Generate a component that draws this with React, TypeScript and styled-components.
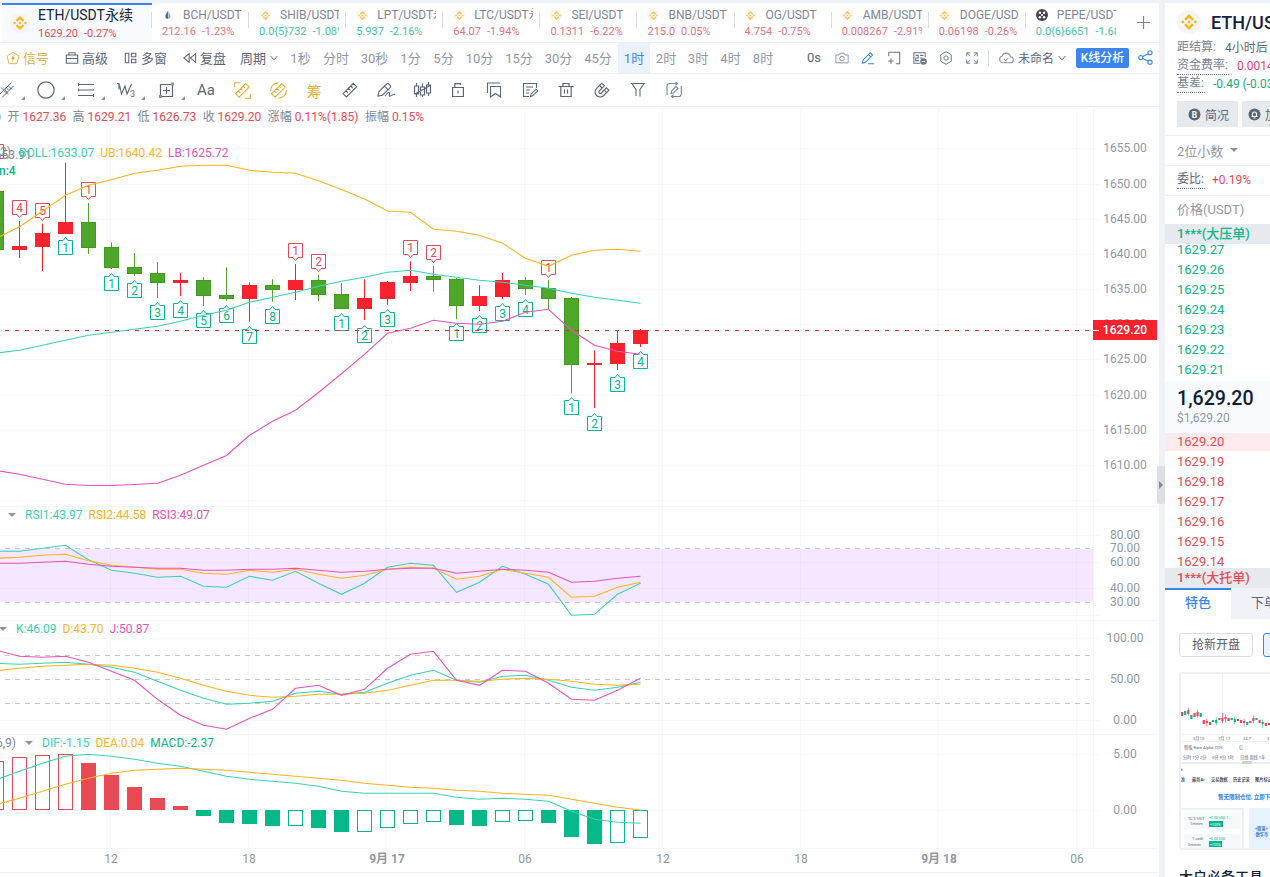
import React from "react";
import styled, { createGlobalStyle } from "styled-components";

const Global = createGlobalStyle`
  * { box-sizing: border-box; }
  body { margin: 0; overflow: hidden; background: #f1f2f7; }
  body, svg text { font-family: Roboto, "Noto Sans CJK SC", sans-serif; }
`;

const TEAL = "#38d3b4";
const AMBER = "#ffb31a";
const PINK = "#ea51bb";
const UP = "#e84a55";
const DOWN = "#05b889";
const MUTED = "#8f98a6";
const SLATE = "#5b6779";
const GOLD = "#dcae35";
const BLUE = "#3c85ee";

/* ---------- layout ---------- */
const Page = styled.div`
  width: 1270px; height: 877px; overflow: hidden; display: flex; gap: 6px; padding-top: 3px;
  background: #f1f2f7;
`;
const Main = styled.main`
  width: 1159px; flex: none; background: #fff; position: relative; display: flex; flex-direction: column;
`;
const TabBar = styled.div`
  height: 40px; flex: none; display: flex; padding-left: 2px; border-bottom: 1px solid #eef0f3; position: relative;
`;
const ActiveTab = styled.div`
  width: 150px; flex: none; border-top: 2px solid ${BLUE}; background: #f8fafd; display: flex; padding-left: 8px; gap: 8px;
`;
const ActiveName = styled.div`font-size: 14px; line-height: 16px; color: #14233c; margin-top: 2px; white-space: nowrap;`;
const ActiveQuote = styled.div`font-size: 11px; line-height: 14px; color: ${UP}; display: flex; gap: 6px; margin-top: 4px;`;
const CoinRound = styled.div<{ $size: number; $top?: number }>`
  width: ${(p) => p.$size}px; height: ${(p) => p.$size}px; margin-top: ${(p) => p.$top || 0}px; border-radius: 50%;
  background: #f5f5f5; display: flex; align-items: center; justify-content: center; flex: none;
`;
const PairTab = styled.div`
  width: 97.1px; flex: none; padding: 4px 0 0 10px; position: relative; opacity: .78;
  &::before { content: ""; position: absolute; left: -1px; top: 9px; width: 1px; height: 16px; background: #d0d4da; }
`;
const PairHead = styled.div`width: 80px; height: 16px; display: flex; align-items: center;`;
const PairIcon = styled.div`width: 12px; height: 12px; flex: none; margin-right: 9px; display: flex; align-items: center; justify-content: center;`;
const PairName = styled.div`font-size: 12px; line-height: 16px; color: #59657a; overflow: hidden; white-space: nowrap; width: 59px;`;
const PairQuote = styled.div<{ $up?: boolean }>`
  width: 80px; overflow: hidden; white-space: nowrap; font-size: 11px; line-height: 16px; display: flex; gap: 6px; margin-top: 1px;
  color: ${(p) => (p.$up ? DOWN : UP)};
`;
const AddTab = styled.div`position: absolute; left: 1137px; top: 13px; display: flex;`;

const ToolRow = styled.div`
  height: 31px; flex: none; display: flex; align-items: center; border-bottom: 1px solid #eef0f3; font-size: 13px;
  color: ${SLATE}; white-space: nowrap; padding-bottom: 1px;
`;
const Tool = styled.div<{ $w: number; $c?: string; $fs?: number }>`
  width: ${(p) => p.$w}px; flex: none; display: flex; align-items: center; gap: 3px; color: ${(p) => p.$c || SLATE};
  font-size: ${(p) => p.$fs || 13}px;
`;
const Period = styled.div<{ $on?: boolean; $w: number }>`
  width: ${(p) => p.$w}px; height: 30px; flex: none; display: flex; align-items: center; justify-content: center; 
  background: ${(p) => (p.$on ? "#eaf3fd" : "transparent")}; color: ${(p) => (p.$on ? BLUE : MUTED)};
`;
const Divider = styled.div`width: 1px; height: 16px; background: #d8dbe1; margin-right: 9px;`;
const AnalyseButton = styled.div`
  width: 53px; height: 20px; background: ${BLUE}; border-radius: 2px; color: #fff; font-size: 12px; line-height: 20px;
  font-weight: 500; text-align: center; margin-right: 9px; flex: none;
`;
const DrawRow = styled.div`height: 33px; flex: none; display: flex; align-items: center; border-bottom: 1px solid #eef0f3;`;
const DrawTool = styled.div<{ $w: number; $c?: string; $edge?: boolean }>`
  width: ${(p) => p.$w}px; height: 32px; flex: none; display: flex; align-items: center; position: relative;
  justify-content: ${(p) => (p.$edge ? "flex-start" : "center")};
  color: ${(p) => p.$c || SLATE}; font-size: 15px;
`;
const Corner = styled.i`
  position: absolute; right: 1px; bottom: 6px; border: 2.5px solid #8b94a2; border-top-color: transparent; border-left-color: transparent;
`;

const ChartArea = styled.div`position: relative; flex: 1; overflow: hidden;`;
const Legend = styled.div<{ $x: number; $y: number; $gap?: number }>`
  position: absolute; left: ${(p) => p.$x}px; top: ${(p) => p.$y}px; display: flex; gap: ${(p) => p.$gap || 6}px; font-size: 12px; line-height: 14px;
  white-space: nowrap; color: #7d8795;
`;
const Value = styled.span<{ $c: string; $b?: boolean }>`color: ${(p) => p.$c}; font-weight: ${(p) => (p.$b ? 500 : 400)};`;
const Caret = styled.i<{ $l?: number; $m?: number }>`
  width: 0; height: 0; border: 4px solid transparent; border-top-color: #8b94a2; border-bottom: 0; align-self: center;
  margin-left: ${(p) => p.$l || 0}px; margin-right: ${(p) => p.$m || 0}px;
`;
const Handle = styled.div`
  position: absolute; right: -6px; top: 463px; width: 8px; height: 38px; background: #dce0e5; border-radius: 2px; z-index: 2;
  display: flex; align-items: center; padding-left: 2px;
  i { border: 4px solid transparent; border-left-color: #838d9b; border-right: 0; }
`;

/* ---------- side panel ---------- */
const Side = styled.aside`
  width: 240px; flex: none; background: #fff; display: flex; flex-direction: column;
  > * { flex: none; }
`;
const SideTitle = styled.div`
  display: flex; align-items: center; gap: 10px; padding: 7px 0 0 12px; font-size: 18px; font-weight: 500; color: #14233c; height: 31px;
`;
const Facts = styled.div`padding: 5px 0 0 12px; height: 63px;`;
const Fact = styled.div`height: 18px; display: flex; align-items: center; gap: 8px; font-size: 12px; line-height: 17px; white-space: nowrap;`;
const Label = styled.span<{ $dot?: boolean; $dark?: boolean }>`
  color: ${(p) => (p.$dark ? SLATE : "#78828f")}; line-height: 17px; padding-right: 1px;
  border-bottom: ${(p) => (p.$dot ? "1px dotted #6f7989" : "1px solid transparent")};
`;
const Chips = styled.div`display: flex; gap: 4px; padding: 4px 0 8px 12px; height: 39px; border-bottom: 1px solid #eef0f3;`;
const Chip = styled.div`
  width: 61px; height: 26px; background: #e7eaed; font-size: 12px; color: ${SLATE}; display: flex; align-items: center; gap: 4px;
  padding-left: 11px; white-space: nowrap; flex: none; overflow: hidden;
  &:nth-child(2) { padding-left: 6px; }
`;
const Strip = styled.div<{ $last?: boolean; $h: number; $fs?: number }>`
  height: ${(p) => p.$h}px; padding-left: 12px; display: flex; align-items: center; gap: 7px; color: ${MUTED}; white-space: nowrap;
  border-bottom: ${(p) => (p.$last ? 0 : 1)}px solid #eef0f3; font-size: ${(p) => p.$fs || 13}px;
  padding-bottom: ${(p) => (p.$last ? 3 : 1)}px;
`;
const Wall = styled.div<{ $c: string }>`
  height: 20px; padding-left: 12px; background: #e6e9ed; color: ${(p) => p.$c}; font-size: 13px; line-height: 19px; font-weight: 500;
`;
const Book = styled.div<{ $side: "ask" | "bid" }>`
  height: ${(p) => (p.$side === "ask" ? 137 : 136)}px; overflow: hidden;
  display: flex; flex-direction: column; justify-content: ${(p) => (p.$side === "ask" ? "flex-end" : "flex-start")};
  padding-bottom: ${(p) => (p.$side === "ask" ? 1 : 0)}px;
`;
const Level = styled.div<{ $c: string; $hot?: boolean }>`
  height: 18px; margin: 1px 0; padding-left: 12px; font-size: 13px; line-height: 18px; flex: none; color: ${(p) => p.$c};
  background: ${(p) => (p.$hot ? "#fceaec" : "transparent")};
`;
const Last = styled.div`height: 51px; background: #f8fafd; padding: 6px 0 0 12px;`;
const LastPrice = styled.div`font-size: 19.6px; line-height: 23px; font-weight: 500; color: #101f38;`;
const LastUsd = styled.div`font-size: 12px; line-height: 16px; color: ${MUTED};`;
const SideTabs = styled.div`display: flex; height: 31px; font-size: 13px;`;
const SideTab = styled.div<{ $on?: boolean }>`
  width: 66px; text-align: center; flex: none; font-weight: ${(p) => (p.$on ? 500 : 400)};
  color: ${(p) => (p.$on ? BLUE : SLATE)}; background: ${(p) => (p.$on ? "#fff" : "#f1f2f7")};
  border-top: ${(p) => (p.$on ? 2 : 0)}px solid ${BLUE}; line-height: ${(p) => (p.$on ? 26 : 29)}px;
`;
const Pills = styled.div`display: flex; gap: 10px; padding: 14px 0 0 14px;`;
const Pill = styled.div<{ $on?: boolean }>`
  width: 74px; height: 24px; border: 1px solid ${(p) => (p.$on ? BLUE : "#dadde3")}; border-radius: 3px; text-align: center; flex: none;
  background: ${(p) => (p.$on ? "#eaf3fd" : "#fff")}; font-size: 12px; line-height: 23px; color: #4f5b6c;
`;
const Thumb = styled.div`
  margin: 15px 0 0 14px; width: 200px; height: 178px; border: 2px solid #eff0f5; border-radius: 3px; overflow: hidden;
`;
const SideHeading = styled.div`margin: 17px 0 0 14px; font-size: 14px; line-height: 20px; font-weight: 500; color: #14233c; white-space: nowrap;`;

/* ---------- icons ---------- */
const Svg: React.FC<{ w?: number; h?: number; vb?: string; sw?: number; c?: string; children: React.ReactNode }> = ({
  w = 16, h = 16, vb = "0 0 16 16", sw = 1, c = "currentColor", children,
}) => (
  <svg width={w} height={h} viewBox={vb} fill="none" stroke={c} strokeWidth={sw} display="block">
    {children}
  </svg>
);
const Bnb = ({ s }: { s: number }) => (
  <svg width={s} height={s} viewBox="0 0 16 16" fill="#fbb41d">
    <path d="M8 0l4.9 4.9-1.8 1.8L8 3.6 4.9 6.7 3.1 4.9zM1.8 6.2L3.6 8 1.8 9.8 0 8zM14.2 6.2L16 8l-1.8 1.8L12.4 8zM8 6.2L9.8 8 8 9.8 6.2 8zM4.9 9.3L8 12.4l3.1-3.1 1.8 1.8L8 16l-4.9-4.9z" />
  </svg>
);
const Flame = () => (
  <svg width="10" height="10" viewBox="0 0 10 10"><path d="M5 1C4 3 1.8 5 2.5 7.4 3 9 6 9 5 8z" fill="#2c3950" /><path d="M5.6 1c.3 2 2.4 4 1.6 6.6C6.7 9 5 9 5 8.4z" fill="#5ba7e8" /></svg>
);
const Okx = () => (
  <svg width="12" height="12" viewBox="0 0 12 12"><circle cx="6" cy="6" r="6" fill="#16101d" />
    <g fill="#fff"><circle cx="6" cy="6" r="1.1" /><circle cx="3.9" cy="3.7" r="1.2" /><circle cx="8.1" cy="3.7" r="1.2" /><circle cx="3.9" cy="8.3" r="1.2" /><circle cx="8.1" cy="8.3" r="1.2" /></g></svg>
);
const Chevron = () => <Svg w={10} h={10} vb="0 0 10 10"><path d="M1.5 3L5 6.8 8.5 3" /></Svg>;
const ChipB = () => (
  <svg width="13" height="13" viewBox="0 0 13 13"><circle cx="6.5" cy="6.5" r="6" fill="#5b6779" />
    <text x="6.5" y="9.6" fontSize="8.5" fontWeight="700" fill="#fff" textAnchor="middle">B</text></svg>
);
const ChipBell = () => (
  <svg width="13" height="13" viewBox="0 0 13 13"><circle cx="6.5" cy="6.5" r="6" fill="#5b6779" />
    <path d="M3.5 8.5h6M4.5 8V6a2 2 0 014 0v2M5.5 10h2" stroke="#fff" fill="none" strokeWidth="1.1" /></svg>
);

const RulerShape = () => <path d="M1 11.6L11.3 1.3l3.4 3.4L4.4 15zM4 8.800l2 2M6.400 6.400l2 2M8.800 4l2 2" />;
const GoldRuler = () => <path d="M1.500 11L11 1.500l3.300 3.300-9.500 9.500zM4.200 8.300l1.700 1.700M6.400 6.100l1.700 1.700M8.600 3.900l1.700 1.700" />;
const drawIcons: { w: number; el: React.ReactNode }[] = [
  { w: 26, el: <Svg w={15} vb="1 0 15 16"><path d="M0 13L12.500 .5M3 15.500L14.500 4" /><path d="M2 5.500l4 4M5.500 9l3.500 3.500M6.500 5l3 3M9.500 4l3.500 3.500M5 6.500l4 5" strokeWidth=".9" /></Svg> },
  { w: 40, el: <Svg w={18} h={18} vb="0 0 18 18"><circle cx="9" cy="9" r="8.2" strokeWidth="1.2" /></Svg> },
  { w: 40, el: <Svg w={18} h={14} vb="0 0 18 14" sw={1.1}><path d="M1 1.500h16M1 7h16M1 12.500h16M1.500 0v3M16.500 11v3M1.500 5.500v3" /></Svg> },
  { w: 40, el: <Svg w={20} h={16} vb="0 0 20 16" sw={1.1}><path d="M1 1.5h2v6M3.5 2.5L5.5 12 9 4l2 8 4.5-10" /><text x="14" y="14.5" fontSize="9" fill="currentColor" stroke="none">3</text></Svg> },
  { w: 40, el: <Svg w={17} h={16} vb="0 0 17 16"><path d="M2.5 2.5h12v12h-12zM8.5 5v7M5 8.5h7" strokeWidth="1.2" /><path d="M1 13h3v3H1zM13 .5h3v3h-3z" fill="#8b94a2" stroke="none" /></Svg> },
];
const drawIcons2: { c?: string; el: React.ReactNode }[] = [
  { el: <span>Aa</span> },
  { c: GOLD, el: <Svg w={17} h={17}><GoldRuler /><path d="M.7 5V.7H6M10.500 15.300h4.800V11" /></Svg> },
  { c: GOLD, el: <Svg w={17} h={17}><GoldRuler /><path d="M.8 8.500A7 7 0 018 .8M15.300 7.500a7 7 0 01-7.500 7.700" /></Svg> },
  { c: GOLD, el: <span>筹</span> },
  { el: <Svg sw={1.1}><RulerShape /></Svg> },
  { el: <Svg w={19} h={16} vb="0 0 19 16" sw={1.1}><path d="M1 14l.8-4.200L9.500 2a1.600 1.600 0 012.300 0l1.400 1.400a1.600 1.600 0 010 2.300L5.500 13.200zM7.500 4.200l3.600 3.600M8 14.300c2-3.500 4-4.500 4.500-3.200s-1 3.200.5 3 2-2 5-1.600" /></Svg> },
  { el: <Svg w={19} h={16} vb="0 0 19 16" sw={1.2}><path d="M1.500 4h4v8h-4zM7.500 5h4v8h-4zM13.500 3h4v8h-4zM3.500 1v3M3.500 12v3M9.500 1.500V5M9.500 13v2M15.500 0v3M15.500 11v3M2 12L17 3.500" /></Svg> },
  { el: <Svg sw={1.2}><path d="M2.600 5.500h10.800v9H2.600zM4.800 5.500V1.600h5.400V3M8 8.500v3" /></Svg> },
  { el: <Svg sw={1.1}><path d="M1.500 11V1H14M4.500 4.500h10V15l-5-3.500-5 3.500z" /></Svg> },
  { el: <Svg sw={1.1}><path d="M14.500 6V1.500h-13v13H7M4 5h7M4 8h4M4 11h3M8.500 14.500l.6-2.300 5-5 1.600 1.600-5 5z" /></Svg> },
  { el: <Svg sw={1.2}><path d="M.5 4.500h15M2.800 4.500v10h10.400v-10M5 4.500v-3h6v3M6.500 7.500v4M9.500 7.500v4" /></Svg> },
  { el: <Svg sw={1.1}><path d="M7.800 1.200L2.600 6.400a5 5 0 007.100 7.100l5.200-5.200-2.500-2.500-5.200 5.200a1.300 1.300 0 01-2-2l5.200-5.200zM5.500 3.500L8 6M10.100 8.100l2.500 2.500" /></Svg> },
  { el: <Svg sw={1.1}><path d="M.8 1.500h14.400M1.800 1.500L6 7.500V14M14.200 1.500L10 7.500v7" /></Svg> },
  { el: <Svg sw={1.1} c="#7a8594"><path d="M1 13V4a2.500 2.500 0 012.500-2.500H11M9.500 0l2 1.500-2 1.800M15.300 4v8a2.500 2.500 0 01-2.500 2.500H6M7.500 16l-2-1.500 2-1.800M5 11.500l.5-2.500L10 4.500l2 2L7.400 11z" /></Svg> },
];

/* ---------- data ---------- */
const pairs: [string, string, string, boolean, React.ReactNode?][] = [
  ["BCH/USDT永续", "212.16", "-1.23%", false, <Flame key="f" />],
  ["SHIB/USDT永续", "0.0{5}732", "-1.08%", true],
  ["LPT/USDT永续", "5.937", "-2.16%", true],
  ["LTC/USDT永续", "64.07", "-1.94%", false],
  ["SEI/USDT", "0.1311", "-6.22%", false],
  ["BNB/USDT", "215.0", "0.05%", false],
  ["OG/USDT", "4.754", "-0.75%", false],
  ["AMB/USDT永续", "0.008267", "-2.91%", false],
  ["DOGE/USDT", "0.06198", "-0.26%", false],
  ["PEPE/USDT永续", "0.0{6}6651", "-1.68%", true, <Okx key="o" />],
];
const periods: [string, number][] = [
  ["1秒", 33], ["分时", 38], ["30秒", 39], ["1分", 33], ["5分", 33], ["10分", 39], ["15分", 40], ["30分", 39], ["45分", 40],
  ["1时", 32], ["2时", 32], ["3时", 32], ["4时", 33], ["8时", 32],
];

/* candle: [high, low, bodyTop, bodyBottom, rising] in chart pixels, one per hour */
const candles: [number, number, number, number, 0 | 1][] = [
  [191, 250, 191, 250, 0], [221, 258, 246, 250, 1], [223.7, 271, 233, 247, 1], [162.7, 234, 222, 234, 1], [203, 254, 222, 248, 0],
  [242.3, 269, 247, 268, 0], [253, 275.7, 267, 274, 0], [262, 298, 273, 283, 0], [272.7, 296, 280, 283, 1], [277, 306, 280, 296, 0],
  [267.3, 300.7, 295, 299, 0], [282.3, 321.7, 285, 299, 1], [279.3, 301.7, 285, 290, 0], [264, 300, 280, 290, 1], [275, 301, 280, 295, 0],
  [283, 309, 294, 309, 0], [279.3, 320, 298, 309, 1], [281, 305, 282, 299, 1], [261.3, 291, 276, 283, 1], [266, 291.7, 276, 280, 0],
  [278, 319.3, 279, 306, 0], [285.3, 311, 296, 306, 1], [273, 298.7, 280, 297, 1], [277, 295, 280, 289, 0], [280, 309, 288, 299, 0],
  [297, 393.3, 298, 365, 0], [350.3, 408, 363, 365, 1], [331, 370, 343, 364, 1], [329, 347, 330, 344, 1],
];
const topTags: [number, string, number][] = [
  [-1, "3", 144], [0, "4", 200], [1, "5", 203], [3, "1", 182], [12, "1", 243], [13, "2", 254], [17, "1", 240], [18, "2", 245], [23, "1", 260],
];
const lowTags: [number, string, number][] = [
  [2, "1", 240], [4, "1", 276], [5, "2", 283], [6, "3", 305], [7, "4", 303], [8, "5", 313], [9, "6", 308], [10, "7", 329], [11, "8", 309],
  [14, "1", 316], [15, "2", 328], [16, "3", 312], [19, "1", 326], [20, "2", 318], [21, "3", 306], [22, "4", 302], [24, "1", 400],
  [25, "2", 416], [26, "3", 377], [27, "4", 354],
];
const upper = [238, 226.7, 211.3, 195.3, 185.3, 179.7, 173.3, 170.3, 166.3, 165.3, 165.3, 170.3, 172.3, 173.3, 180.7, 189.5, 199, 211, 212.3, 229.3, 231.3, 235.3, 243.3, 258.3, 266.3, 255.3, 250.3, 249.3, 251.3];
const middle = [353, 350.3, 345.3, 340.3, 335.3, 332.3, 329.3, 326.3, 321.3, 315.3, 310.3, 302.3, 297.3, 292.3, 286.3, 281.3, 277.3, 272.3, 270.3, 274.3, 277.3, 280.3, 282.3, 285.3, 288.3, 293.3, 297.3, 300.3, 303.3];
const lower = [470.5, 474.3, 479.3, 484.3, 485.5, 485.5, 484.5, 483.3, 475.3, 465.3, 455.5, 435.3, 421.3, 410.3, 392.5, 373.7, 354.3, 333.3, 328.3, 320.3, 323.3, 324.3, 321.3, 312.3, 309.3, 330.3, 345.3, 351.3, 354.3];
/* oscillator values are thirds of a pixel below the pane origin */
const rsi1 = [154, 154, 145, 136, 179, 211, 220, 232, 229, 259, 262, 229, 241, 214, 250, 283, 250, 202, 190, 196, 277, 247, 199, 223, 253, 346, 343, 283, 250];
const rsi2 = [175, 172, 166, 163, 182, 196, 202, 208, 208, 220, 223, 211, 217, 208, 223, 235, 226, 208, 202, 205, 238, 229, 208, 220, 232, 292, 289, 262, 247];
const rsi3 = [190, 190, 187, 184, 193, 199, 202, 205, 205, 211, 211, 208, 208, 205, 211, 217, 214, 208, 205, 205, 220, 214, 208, 211, 217, 247, 244, 235, 229];
const kLine = [490, 493, 490, 487, 493, 502, 517, 544, 571, 595, 613, 610, 604, 580, 574, 583, 577, 550, 526, 511, 541, 547, 529, 526, 541, 562, 571, 562, 547];
const dLine = [512, 505, 499, 496, 493, 496, 505, 517, 535, 556, 574, 586, 592, 589, 583, 583, 580, 571, 556, 541, 541, 544, 538, 535, 538, 544, 553, 556, 553];
const jLine = [451, 469, 472, 469, 487, 514, 541, 598, 646, 676, 688, 655, 628, 565, 556, 586, 568, 505, 463, 454, 541, 556, 511, 514, 550, 598, 601, 571, 535];
const dif = [149, 124, 100, 79, 73, 79, 88, 100, 109, 124, 139, 148, 154, 160, 169, 184, 190, 190, 190, 190, 202, 208, 205, 208, 214, 244, 268, 277, 280];
const dea = [223, 205, 184, 163, 145, 130, 121, 118, 115, 118, 121, 127, 133, 139, 145, 151, 160, 166, 172, 175, 181, 184, 190, 193, 196, 208, 220, 232, 240];
const bars: [number, 0 | 1][] = [
  [93, 0], [81, 0], [75, 0], [72, 0], [99, 1], [135, 1], [171, 1], [204, 1], [228, 1], [258, 1], [279, 1], [282, 1], [288, 1], [288, 0], [294, 1],
  [306, 1], [306, 0], [294, 0], [282, 0], [276, 0], [285, 1], [288, 1], [276, 0], [273, 0], [279, 1], [321, 1], [342, 1], [339, 0], [324, 0],
];

const TOP = 107;
const cx = (i: number) => 19.5 + 23 * i;
const poly = (vals: number[], base = 0, k = 1) => vals.map((v, n) => `${cx(n - 1)},${(base + v * k).toFixed(1)}`).join(" ");
const Line = ({ v, base, k, c }: { v: number[]; base?: number; k?: number; c: string }) => (
  <polyline points={poly(v, base, k)} stroke={c} fill="none" strokeWidth="1.1" />
);
const priceTicks: [string, number][] = [
  ["1655.00", 148.5], ["1650.00", 184.5], ["1645.00", 219.5], ["1640.00", 254.5], ["1635.00", 289.5], ["1630.00", 324.5],
  ["1625.00", 359.5], ["1620.00", 395.5], ["1615.00", 430.5], ["1610.00", 465.5],
];
const otherTicks: [string, number][] = [
  ["80.00", 535.5], ["70.00", 548.5], ["60.00", 562.5], ["40.00", 588.5], ["30.00", 602.5], ["100.00", 638.5], ["50.00", 679.5],
  ["0.00", 720.5], ["5.00", 754.5], ["0.00", 810.5],
];
const hours: [string, number][] = [["12", 111], ["18", 249], ["9月 17", 387], ["06", 525], ["12", 663], ["18", 801], ["9月 18", 939], ["06", 1077]];

const Chart = () => (
  <svg width="1159" height="770" viewBox={`0 ${TOP} 1159 770`} display="block">
    <rect x="0" y="549" width="1093" height="53" fill="#f5e7ff" />
    <g stroke="#8a90b0" strokeOpacity=".055" shapeRendering="crispEdges">
      {[110.5, 248.5, 386.5, 524.5, 662.5, 800.5, 938.5, 1076.5].map((x) => <line key={x} x1={x} x2={x} y1={TOP} y2="848" />)}
      {[148.5, 184.5, 219.5, 254.5, 289.5, 324.5, 359.5, 395.5, 430.5, 465.5, 500.5, 535.5, 562.5, 588.5, 615.5, 638.5, 720.5, 754.5, 810.5].map((y) => (
        <line key={y} x1="0" x2="1099" y1={y} y2={y} />
      ))}
    </g>
    <g stroke="#f5f6f8" shapeRendering="crispEdges">
      {[506.5, 620.5, 734.5, 848.5].map((y) => <line key={y} x1="0" x2="1157" y1={y} y2={y} />)}
      <line x1="1093.5" x2="1093.5" y1={TOP} y2="848" />
      <line x1="0" x2="1159" y1="872.5" y2="872.5" stroke="#eef0f3" />
    </g>
    <g stroke="#c8c8c8" strokeDasharray="5 5" strokeDashoffset="5" shapeRendering="crispEdges">
      {[548.5, 602.5, 655.5, 679.5, 703.5].map((y) => <line key={y} x1="0" x2="1093" y1={y} y2={y} />)}
    </g>
    {candles.map(([h, l, a, b, up], n) => {
      const c = up ? "#f6222d" : "#4ea72a";
      const x = cx(n - 1);
      return (
        <g key={n} fill={c}>
          <rect x={x - 0.5} y={h} width="1" height={l - h} />
          <rect x={x - 7} y={a + 0.5} width="14" height={b - a - 1} stroke={up ? c : "#429a1e"} />
        </g>
      );
    })}
    {topTags.map(([i, t, y]) => (
      <g key={i}>
        <path d={`M${cx(i) - 7} ${y + 0.5}h14v14h-4.5l-2.5 3-2.5-3h-4.5z`} stroke={UP} fill="none" />
        <text x={cx(i)} y={y + 12} textAnchor="middle" fontSize="12" fill={UP}>{t}</text>
      </g>
    ))}
    {lowTags.map(([i, t, y]) => (
      <g key={i}>
        <path d={`M${cx(i) - 7} ${y + 14.5}h14v-14h-4.5l-2.5-3-2.5 3h-4.5z`} stroke={DOWN} fill="none" />
        <text x={cx(i)} y={y + 12} textAnchor="middle" fontSize="12" fill={DOWN}>{t}</text>
      </g>
    ))}
    <line x1="5" x2="1093" y1="330.5" y2="330.5" stroke="#f6222d" strokeDasharray="4 6" shapeRendering="crispEdges" />
    <Line v={upper} c={AMBER} /><Line v={middle} c={TEAL} /><Line v={lower} c={PINK} />
    <Line v={rsi1} base={500} k={1 / 3} c={TEAL} /><Line v={rsi2} base={500} k={1 / 3} c={AMBER} /><Line v={rsi3} base={500} k={1 / 3} c={PINK} />
    <Line v={kLine} base={500} k={1 / 3} c={TEAL} /><Line v={dLine} base={500} k={1 / 3} c={AMBER} /><Line v={jLine} base={500} k={1 / 3} c={PINK} />
    {bars.map(([v, solid], n) => {
      const y = 730 + v / 3;
      const c = v < 240 ? UP : DOWN;
      return (
        <rect key={n} x={cx(n - 1) - 7} y={Math.min(y, 810) + 0.5} width="14" height={Math.abs(810 - y) - 1} stroke={c} fill={solid ? c : "none"} />
      );
    })}
    <Line v={dif} base={730} k={1 / 3} c={TEAL} /><Line v={dea} base={730} k={1 / 3} c={AMBER} />
    <g fontSize="12" fill={MUTED} textAnchor="middle">
      {[...priceTicks, ...otherTicks].map(([t, y]) => <text key={t + y} x="1125" y={y + 3.5}>{t}</text>)}
      {hours.map(([t, x]) => <text key={x} x={x} y="863" fontWeight={t.length > 2 ? 700 : 400}>{t}</text>)}
    </g>
    <rect x="1093" y="320" width="64" height="20" fill="#f6222d" />
    <line x1="1093" x2="1099" y1="330.5" y2="330.5" stroke="#fff" />
    <text x="1125" y="334" fontSize="12" fontWeight="500" fill="#fff" textAnchor="middle">1629.20</text>
  </svg>
);

const ThumbArt = () => {
  const ys = [38, 37, 36, 41, 39, 38, 39, 46, 47, 48, 46, 46, 44, 44, 43, 44, 44, 45, 45, 46, 47, 48, 47, 44, 44, 46, 48, 49, 49];
  return (
    <svg width="196" height="174" viewBox="0 0 196 174" display="block">
      <g stroke="#f1f2f4"><path d="M41.5 0v60M0 60.5h196M0 67.5h196M0 108.5h196" /></g>
      {ys.map((y, i) => (
        <g key={i} fill={i % 5 === 1 || i % 7 === 3 ? "#05b889" : "#e84a55"}>
          <rect x={i * 3.1} y={y} width="2.2" height={i < 8 ? 4 : 2 + (i % 2)} />
          {i % 3 === 2 && <rect x={i * 3.1 + 0.8} y={y - 2.5} width=".6" height="8" />}
        </g>
      ))}
      <rect x="41" y="39" width=".7" height="10" fill="#e84a55" />
      <g fontSize="4.2" fill="#606a78">
        <text x="12" y="66">5月10</text><text x="37" y="66">7月 17</text><text x="62" y="66">24 7</text><text x="86" y="66">31</text>
        <text x="3" y="75">智能 Rate Alpha COIL</text><text x="58" y="75">亿</text>
        <text x="2" y="85">分时 1分 2分</text><text x="31" y="85">5分 9分 1时</text><text x="59" y="85">日线 周线 1年</text>
      </g>
      <rect x="0" y="88" width="196" height="2" fill="#eceef3" /><rect x="61" y="87" width="10" height="3" rx="1" fill="#ccd1d8" />
      <g fontSize="4.2" fontWeight="500" fill="#1d2a40">
        <text x="0" y="107">准</text><text x="11" y="107">最新Ai</text><text x="30" y="107">交易数据</text><text x="52" y="107">历史记录</text><text x="74" y="107">图片标记</text><text x="0" y="97">t</text>
      </g>
      <text x="37" y="125" fontSize="5.5" fontWeight="700" fill="#2f7be0">暂无限制仓位, 立即下单查看</text>
      <rect x="-2" y="135" width="64" height="42" fill="#fff" stroke="#e6f1fc" strokeWidth="2" />
      <rect x="68" y="134" width="80" height="40" fill="#e6f3fe" />
      <g fontSize="4" fill="#606a78">
        <rect x="3" y="139" width="56" height="16" fill="#f7f8fb" /><rect x="3" y="160" width="56" height="16" fill="#f7f8fb" />
        <text x="7" y="146">TCT/UST</text><text x="9" y="151">1mmm</text><text x="11" y="166">1 usdt</text><text x="7" y="172">Smmer</text>
        <rect x="28" y="147" width="14" height="6" fill="#05b889" /><rect x="28" y="167" width="13" height="6" fill="#05b889" />
        <g fill="#05b889" fontSize="3.5"><text x="28" y="145">+0.00 USD 1</text><text x="28" y="166">+0.00 USD</text></g>
        <g fill="#fff" fontSize="3.5"><text x="29" y="151.5">+100%</text><text x="29" y="171.5">+100%</text></g>
      </g>
      <g fontSize="4.2" fontWeight="700" fill="#2f7be0"><text x="74" y="156">+欧易+</text><text x="73" y="161.500">-数字币</text></g>
    </svg>
  );
};

export default function App() {
  const asks = ["27", "26", "25", "24", "23", "22", "21"];
  const bids = ["20", "19", "18", "17", "16", "15", "14"];
  return (
    <>
      <Global />
      <Page>
        <Main>
          <TabBar>
            <ActiveTab>
              <CoinRound $size={20} $top={8}><Bnb s={14} /></CoinRound>
              <div>
                <ActiveName>ETH/USDT永续</ActiveName>
                <ActiveQuote><span>1629.20</span><span>-0.27%</span></ActiveQuote>
              </div>
            </ActiveTab>
            {pairs.map(([n, p, d, up, icon]) => (
              <PairTab key={n}>
                <PairHead><PairIcon>{icon || <CoinRound $size={12}><Bnb s={9} /></CoinRound>}</PairIcon><PairName>{n}</PairName></PairHead>
                <PairQuote $up={up}><span>{p}</span><span>{d}</span></PairQuote>
              </PairTab>
            ))}
            <AddTab><Svg w={13} h={13} vb="0 0 13 13" c="#7b8594" sw={1.2}><path d="M6.5 0v13M0 6.5h13" /></Svg></AddTab>
          </TabBar>

          <ToolRow>
            <Tool $w={6} />
            <Tool $w={59} $c={GOLD}><Svg w={14} h={14}><path d="M8 1.2l6.8 4.9-2.4 8.4H3.6L1.2 6.1z" /><path d="M9 4L5.5 9h2l-.6 3.5L10.5 7.5h-2z" fill="currentColor" stroke="none" /></Svg>信号</Tool>
            <Tool $w={59}><Svg w={14} h={14}><path d="M1.5 4.5h13v9.5h-13zM4.5 4.5v-2.5h7v2.5M1.5 8.5h13" strokeWidth="1.2" /></Svg>高级</Tool>
            <Tool $w={59}><Svg w={14} h={14}><path d="M1.5 2.5h4v11h-4zM8.5 2.5h5v4h-5zM8.5 9.5h5v4h-5z" strokeWidth="1.2" /></Svg>多窗</Tool>
            <Tool $w={57}><Svg w={14} h={14}><path d="M7 3v10L1 8zM14.5 3v10L8.5 8z" strokeWidth="1.2" /></Svg>复盘</Tool>
            <Tool $w={44}>周期 <Chevron /></Tool>
            {periods.map(([t, w]) => <Period key={t} $w={w} $on={t === "1时"}>{t}</Period>)}
            <Tool $w={28} />
            <Tool $w={28}>0s</Tool>
            <Tool $w={26} $c="#7f8998"><Svg w={14} h={14}><path d="M1 4.5h3.5l1.2-2h4.6l1.2 2H15v9H1z" /><circle cx="8" cy="8.7" r="2.6" /></Svg></Tool>
            <Tool $w={26} $c={BLUE}><Svg w={14} h={14} sw={1.2}><path d="M1.5 14l.8-3.5L10.5 2l2.7 2.7L5 13zM8.5 4l2.7 2.7M8 14.5h7" /></Svg></Tool>
            <Tool $w={26} $c="#6b7686"><Svg w={14} h={14} sw={1.2}><path d="M2 6V1.5h12.5v13H10M4.5 8.5v6M1.5 11.5h6" /></Svg></Tool>
            <Tool $w={26} $c="#6b7686"><Svg w={14} h={14} sw={1.2}><path d="M14 7V2H1v12h7M3 5h3v3H3v3h4M8 5h4M8 8h3" /><circle cx="12" cy="12" r="3.8" fill="currentColor" stroke="none" /><path d="M10 12h4" stroke="#fff" /></Svg></Tool>
            <Tool $w={26} $c="#6b7686"><Svg w={14} h={14} sw={1.1}><path d="M8 .8l6 3.5v7.4l-6 3.5-6-3.5V4.3z" /><circle cx="8" cy="8" r="2.5" /></Svg></Tool>
            <Tool $w={23} $c="#7f8998"><Svg w={14} h={14} sw={1.2}><path d="M2 6V2h4M2 2l4 4M10 2h4v4M14 2l-4 4M2 10v4h4M2 14l4-4M14 10v4h-4M14 14l-4-4" /></Svg></Tool>
            <Divider />
            <Tool $w={20} $c="#8b95a3"><Svg w={16} h={14} vb="0 0 18 16" sw={1.2}><path d="M5 13.5a4 4 0 01-.3-7.8A4.8 4.8 0 0114 6.5a3.5 3.5 0 01-.5 7zM6.5 9l2 2 3-3" /></Svg></Tool>
            <Tool $w={58} $fs={12}>未命名<Chevron /></Tool>
            <AnalyseButton>K线分析</AnalyseButton>
            <Svg w={15} h={15} c={BLUE} sw={1.2}><circle cx="3" cy="8" r="2.2" /><circle cx="12.8" cy="3" r="2.2" /><circle cx="12.8" cy="13" r="2.2" /><path d="M5 7l6-3M5 9l6 3" /></Svg>
          </ToolRow>

          <DrawRow>
            {drawIcons.map((d, i) => <DrawTool key={i} $w={d.w} $edge={i === 0}>{d.el}<Corner /></DrawTool>)}
            <Tool $w={2} />
            {drawIcons2.map((d, i) => <DrawTool key={i} $w={36} $c={d.c}>{d.el}</DrawTool>)}
          </DrawRow>

          <ChartArea>
            <Chart />
            <Legend $x={-3} $y={3} $gap={6.4}>
              <span>)</span>
              <span>开 <Value $c={UP}>1627.36</Value></span><span>高 <Value $c={UP}>1629.21</Value></span>
              <span>低 <Value $c={UP}>1626.73</Value></span><span>收 <Value $c={UP}>1629.20</Value></span>
              <span>涨幅 <Value $c={UP}>0.11%(1.85)</Value></span><span>振幅 <Value $c={UP}>0.15%</Value></span>
            </Legend>
            <Legend $x={0} $y={38}>2)</Legend>
            <Legend $x={-12} $y={41}>1653.91</Legend>
            <Legend $x={19} $y={39}>
              <Value $c={TEAL}>BOLL:1633.07</Value><Value $c={AMBER}>UB:1640.42</Value><Value $c={PINK}>LB:1625.72</Value>
            </Legend>
            <Legend $x={-1} $y={57}><Value $c={DOWN} $b>n:4</Value></Legend>
            <Legend $x={8} $y={401}>
              <Caret $m={3} /><Value $c={TEAL}>RSI1:43.97</Value><Value $c={AMBER}>RSI2:44.58</Value><Value $c={PINK}>RSI3:49.07</Value>
            </Legend>
            <Legend $x={-1} $y={515}>
              <Caret $m={3} /><Value $c={TEAL}>K:46.09</Value><Value $c={AMBER}>D:43.70</Value><Value $c={PINK}>J:50.87</Value>
            </Legend>
            <Legend $x={-4} $y={629}>
              <span>6,9)</span><Caret $l={3} $m={3} /><Value $c={TEAL}>DIF:-1.15</Value><Value $c={AMBER}>DEA:0.04</Value><Value $c={DOWN}>MACD:-2.37</Value>
            </Legend>
          </ChartArea>
          <Handle><i /></Handle>
        </Main>

        <Side>
          <SideTitle><CoinRound $size={24}><Bnb s={16} /></CoinRound>ETH/USDT</SideTitle>
          <Facts>
            <Fact><Label>距结算:</Label><Value $c={SLATE}>4小时后</Value></Fact>
            <Fact><Label $dot>资金费率:</Label><Value $c="#e8476a">0.0014%</Value></Fact>
            <Fact><Label $dot>基差:</Label><Value $c="#16ab7c">-0.49 (-0.03%)</Value></Fact>
          </Facts>
          <Chips><Chip><ChipB />简况</Chip><Chip><ChipBell />加自选</Chip></Chips>
          <Strip $h={30}>2位小数 <Caret /></Strip>
          <Strip $h={30} $fs={12}><Label $dot $dark>委比:</Label><Value $c={UP}>+0.19%</Value></Strip>
          <Strip $h={28} $last>价格(USDT)</Strip>
          <Wall $c={DOWN}>1***(大压单)</Wall>
          <Book $side="ask">{asks.map((a) => <Level key={a} $c={DOWN}>1629.{a}</Level>)}</Book>
          <Last><LastPrice>1,629.20</LastPrice><LastUsd>$1,629.20</LastUsd></Last>
          <Book $side="bid">{bids.map((b, i) => <Level key={b} $c={UP} $hot={i === 0}>1629.{b}</Level>)}</Book>
          <Wall $c={UP}>1***(大托单)</Wall>
          <SideTabs><SideTab $on>特色</SideTab><SideTab>下单</SideTab><SideTab /></SideTabs>
          <Pills><Pill>抢新开盘</Pill><Pill $on>主力大单</Pill></Pills>
          <Thumb><ThumbArt /></Thumb>
          <SideHeading>大户必备工具</SideHeading>
        </Side>
      </Page>
    </>
  );
}
